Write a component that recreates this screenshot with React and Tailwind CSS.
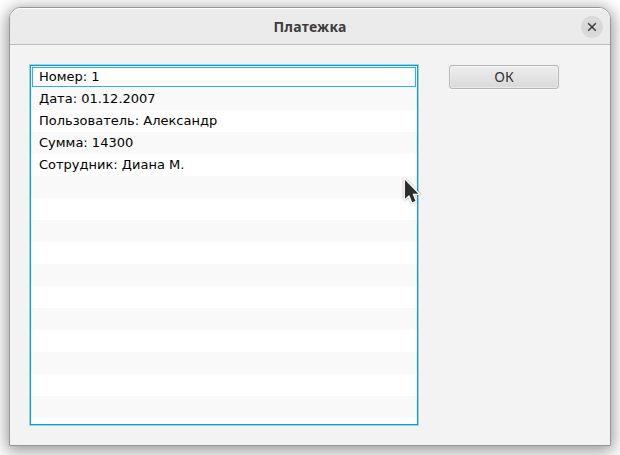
const fields = [
  "Номер: 1",
  "Дата: 01.12.2007",
  "Пользователь: Александр",
  "Сумма: 14300",
  "Сотрудник: Диана М.",
];

const ROW_COUNT = 17;

function TitleBar() {
  return (
    <header className="grid h-[37px] shrink-0 grid-cols-[1fr_auto_1fr] items-center rounded-t-[11px] border-t border-b border-t-white border-b-[#bdbdbd] bg-[#ebebeb]">
      <span />
      <h1 className="font-['Noto_Sans',sans-serif] text-[14px] leading-[18px] font-bold tracking-[0.25px] text-[#3d3d3d]">
        Платежка
      </h1>
      <button
        aria-label="Закрыть"
        className="mr-[7px] flex size-[22px] items-center justify-center justify-self-end rounded-full bg-[#d9d9d9]"
      >
        <svg width="10" height="10" viewBox="0 0 10 10" fill="none" stroke="#3a3a3a" strokeWidth="1.5">
          <path d="M1.2 1.2 8.8 8.8M8.8 1.2 1.2 8.8" />
        </svg>
      </button>
    </header>
  );
}

function FieldList() {
  return (
    <ul className="h-[360px] w-[388px] shrink-0 overflow-hidden border border-[#039ed3] bg-white shadow-[0_0_0_1px_#9ad6ea]">
      {Array.from({ length: ROW_COUNT }, (_, i) => (
        <li key={i} className="h-[22px] px-px pt-px even:bg-[#f9f9f9]">
          <div
            className={
              i === 0
                ? "h-[20px] border border-[#35b0dc] pl-[6px] leading-[17px]"
                : "h-[20px] pl-[7px] leading-[19px]"
            }
          >
            {fields[i]}
          </div>
        </li>
      ))}
    </ul>
  );
}

function Cursor() {
  return (
    <svg
      className="absolute top-[177px] left-[403px] drop-shadow-[0_0_1px_rgba(0,0,0,0.35)]"
      width="18"
      height="28"
      viewBox="0 0 18 28"
    >
      <path
        d="M1.3 1.4V23.2L6 19L8.8 26.2L13.3 24.3L10.4 17.3H16.8Z"
        fill="#2d2d2d"
        stroke="#fff"
        strokeWidth="1.3"
        strokeLinejoin="round"
      />
    </svg>
  );
}

export default function App() {
  return (
    <div className="relative h-[455px] w-[620px] overflow-hidden bg-white pt-[7px] pl-[9px] font-['DejaVu_Sans',sans-serif] text-[13px] text-black">
      <section className="flex h-[439px] w-[602px] flex-col rounded-t-[12px] border border-[#969696] bg-[#f3f3f3] shadow-[0_3px_16px_2px_rgba(0,0,0,0.42)]">
        <TitleBar />
        <main className="flex items-start gap-[31px] pt-[20px] pl-[20px]">
          <FieldList />
          <button className="h-[24px] w-[110px] rounded-[3px] border border-[#b5b5b5] bg-linear-to-b from-[#eeeeee] to-[#d9d9d9] font-['Noto_Sans',sans-serif] text-[14px] leading-[22px] text-[#33333b] shadow-[0_1px_0_#fafafa,inset_0_0_0_1px_rgba(255,255,255,0.4)]">
            ОК
          </button>
        </main>
      </section>
      <Cursor />
    </div>
  );
}
